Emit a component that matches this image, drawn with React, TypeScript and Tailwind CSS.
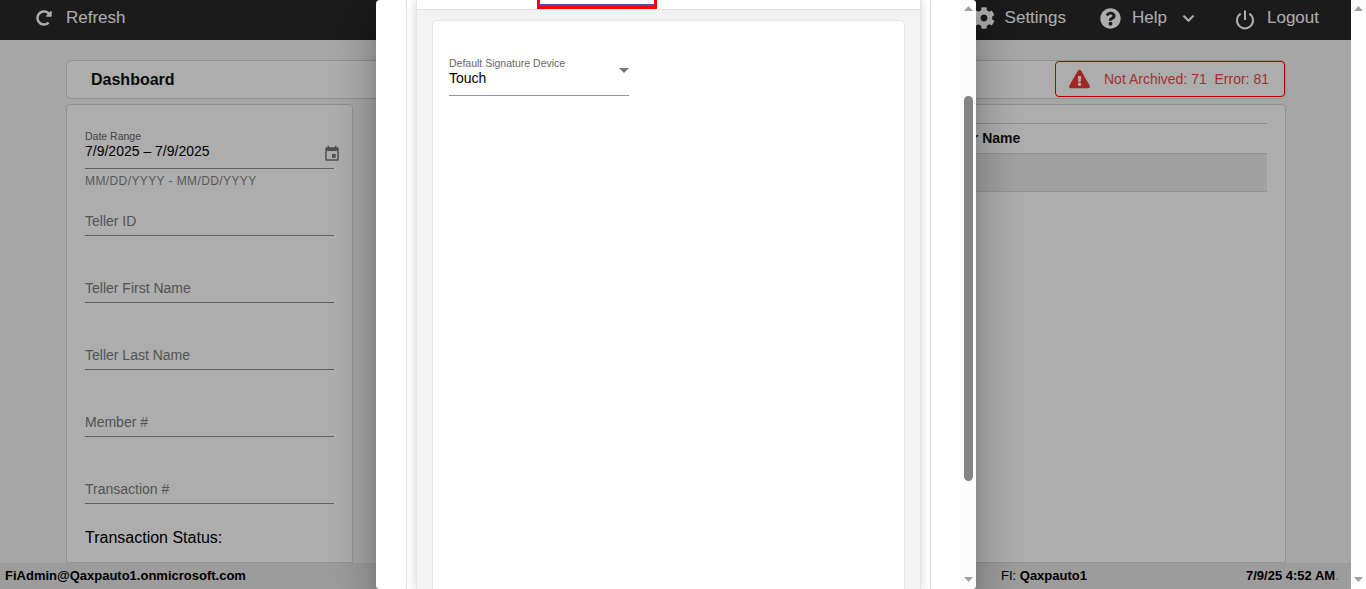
import React from "react";
import { FaCog, FaExclamationTriangle, FaQuestionCircle, FaRedoAlt, FaChevronDown } from "react-icons/fa";

const Field = ({ label }: { label: string }) => (
  <div className="h-[67px] pt-[30px] flex flex-col">
    <div className="h-[23px] pl-0 text-[14px] leading-[16px] pt-[1px] text-[#7c7c7c]">{label}</div>
    <div className="h-px bg-[#8c8c8c] w-[249px]" />
  </div>
);

const Arrow = ({ down }: { down?: boolean }) => (
  <svg width="9" height="5" viewBox="0 0 9 5" className="block shrink-0">
    <path d={down ? "M0 0H9L4.5 5Z" : "M4.5 0L9 5H0Z"} fill="#a0a0a0" />
  </svg>
);

export default function App() {
  return (
    <div className="relative flex h-screen w-full overflow-hidden bg-white font-['Liberation_Sans',Arial,sans-serif]">
      <div className="relative flex-1 min-w-0 flex flex-col bg-[#f5f5f5] overflow-hidden">
        <header className="h-10 shrink-0 bg-[#292929] text-white flex items-center pb-[4px] text-[17px]">
          <FaRedoAlt className="ml-[36px] w-4 h-4" />
          <span className="ml-[14px]">Refresh</span>
          <div className="flex-1" />
          <FaCog className="w-[22px] h-[22px]" />
          <span className="ml-[10px]">Settings</span>
          <FaQuestionCircle className="ml-[34px] w-[21px] h-[21px]" />
          <span className="ml-[11px]">Help</span>
          <FaChevronDown className="ml-[15px] w-[13px] h-[13px]" />
          <svg className="ml-[40px] mt-[3px]" width="20" height="20" viewBox="0 0 20 20" fill="none" stroke="currentColor" strokeWidth="2">
            <path d="M10 0.5V10" />
            <path d="M5.7 3.7A8 8 0 1 0 14.3 3.7" />
          </svg>
          <span className="ml-[12px] mr-[32px]">Logout</span>
        </header>

        <main className="flex-1 min-h-0 overflow-hidden pl-[66px] pr-[65px] pt-[20px] flex flex-col">
          <div className="h-[39px] shrink-0 bg-white border border-[#d4d4d4] rounded-[5px] flex items-start justify-between pl-[24px]">
            <h1 className="self-center text-[16px] font-bold text-[#111]">Dashboard</h1>
            <div className="h-[36px] w-[230px] border border-[#ff0000] rounded-[4px] flex items-center text-[14px] text-[#ef4a4a]">
              <FaExclamationTriangle className="ml-[13px] w-[21px] h-[20px] text-[#ee3c33]" />
              <span className="ml-[14px] whitespace-pre">Not Archived: 71  Error: 81</span>
            </div>
          </div>
          <div className="flex-1 min-h-0 mt-[5px] flex gap-[30px]">
            <section className="w-[287px] shrink-0 bg-white border border-[#d8d8d8] rounded-t-[4px] pl-[18px]">
              <div className="pt-[25px] h-[64px] flex flex-col w-[249px]">
                <div className="text-[10.5px] leading-[12px] text-[#666]">Date Range</div>
                <div className="flex items-start justify-between h-[26px]">
                  <span className="text-[14px] leading-[18px] text-black">7/9/2025 – 7/9/2025</span>
                  <svg width="18" height="18" viewBox="0 0 24 24" fill="#757575" className="mt-[3px] -mr-[7px]">
                    <path d="M17 12h-5v5h5v-5zM16 1v2H8V1H6v2H5c-1.11 0-1.99.9-1.99 2L3 19c0 1.1.89 2 2 2h14c1.1 0 2-.9 2-2V5c0-1.1-.9-2-2-2h-1V1h-2zm3 18H5V8h14v11z" />
                  </svg>
                </div>
                <div className="h-px bg-[#8c8c8c] shrink-0" />
              </div>
              <div className="text-[12px] leading-[14px] mt-[5px] text-[#858585] tracking-[0.4px] whitespace-nowrap">MM/DD/YYYY - MM/DD/YYYY</div>
              <div className="-mt-[6px]">
                <Field label="Teller ID" />
                <Field label="Teller First Name" />
                <Field label="Teller Last Name" />
                <Field label="Member #" />
                <Field label="Transaction #" />
              </div>
              <div className="mt-[12px] text-[16px] leading-[18px] text-black">Transaction Status:</div>
            </section>
            <section className="flex-1 min-w-0 bg-white border border-[#d8d8d8] rounded-t-[4px] pt-[18px] pl-[17px] pr-[18px]">
              <div className="h-[30px] border-t border-[#d0d0d0] pl-[541px] flex items-center text-[14px] font-bold text-[#111]">Teller Name</div>
              <div className="h-[39px] bg-[#ececec] border-y border-[#d8d8d8]" />
            </section>
          </div>
        </main>

        <footer className="relative h-[26px] shrink-0 bg-[#e6e6e6] grid grid-cols-[1001px_245px_1fr] items-center text-[13px] text-black">
          <b className="pl-[5px] whitespace-nowrap">FiAdmin@Qaxpauto1.onmicrosoft.com</b>
          <span className="whitespace-nowrap">FI: <b>Qaxpauto1</b></span>
          <b className="whitespace-nowrap">7/9/25 4:52 AM<span className="font-normal text-[#999]">.</span></b>
        </footer>

        {/* backdrop */}
        <div className="absolute inset-0 bg-black/[0.32]" />

        {/* dialog */}
        <div className="absolute top-0 bottom-0 left-[376px] w-[600px] flex bg-white rounded-[4px] overflow-hidden shadow-[0_11px_15px_-7px_rgba(0,0,0,0.2),0_24px_38px_3px_rgba(0,0,0,0.14),0_9px_46px_8px_rgba(0,0,0,0.12)]">
          <div className="flex-1 min-w-0 pl-[30px] pr-[30px] overflow-hidden">
            <div className="h-full border-x border-[#dedede] px-[9px] overflow-hidden">
              <div className="h-full flex flex-col bg-white border-x border-[#e4e4e4] shadow-[0_0_10px_rgba(0,0,0,0.18)]">
                <div className="h-[10px] shrink-0 bg-white border-b border-[#e2e2e2] pl-[120px]">
                  <div className="w-[120px] h-[9px] border-[3px] border-t-0 border-[#ff0000] flex flex-col justify-end">
                    <div className="h-[2px] bg-[#3f51b5]" />
                  </div>
                </div>
                <div className="flex-1 min-h-0 bg-[#f3f3f3] px-[15px] pt-[10px] overflow-hidden">
                  <div className="h-[600px] bg-white border border-[#e6e6e6] rounded-[4px] pt-[36px] pl-[16px]">
                    <div className="w-[180px] h-[39px] border-b border-[#949494] relative">
                      <div className="text-[10.5px] leading-[12px] text-[#666]">Default Signature Device</div>
                      <div className="text-[14px] leading-[18px] text-black">Touch</div>
                      <svg width="10" height="5" viewBox="0 0 10 5" className="absolute right-0 top-[11px]">
                        <path d="M0 0H10L5 5Z" fill="#757575" />
                      </svg>
                    </div>
                  </div>
                </div>
              </div>
            </div>
          </div>
          <div className="w-[15px] shrink-0 bg-[#fcfcfc] flex flex-col items-center pt-[6px] pb-[7px]">
            <Arrow />
            <div className="w-[9px] h-[385px] mt-[85px] bg-[#858585] rounded-[5px]" />
            <div className="flex-1" />
            <Arrow down />
          </div>
        </div>
      </div>

      {/* page scrollbar */}
      <div className="w-[15px] shrink-0 bg-[#fdfdfd] flex flex-col items-center justify-between pt-[6px] pb-[7px]">
        <Arrow />
        <Arrow down />
      </div>
    </div>
  );
}
